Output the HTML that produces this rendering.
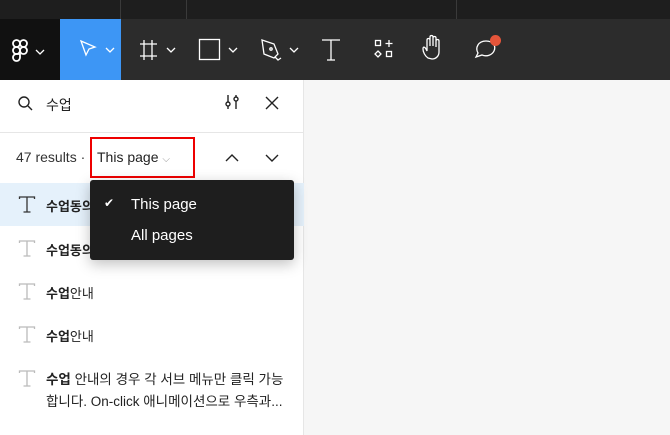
<!DOCTYPE html>
<html><head><meta charset="utf-8"><style>
*{margin:0;padding:0;box-sizing:border-box}
body{width:670px;height:435px;overflow:hidden;background:#f6f6f6;font-family:"Liberation Sans","Noto Sans CJK KR",sans-serif;position:relative}
.a{position:absolute}
.top{left:0;top:0;width:670px;height:19px;background:#1e1e1e}
.sep{top:0;width:1px;height:19px;background:#3a3a3a}
.tb{left:0;top:19px;width:670px;height:61px;background:#2c2c2c}
.panel{left:0;top:80px;width:304px;height:355px;background:#fff;border-right:1px solid #e6e6e6}
.t{font-size:14px;color:#222}
svg{position:absolute;overflow:visible}
</style></head><body>
<div class="a top"></div>
<div class="a sep" style="left:120px"></div><div class="a sep" style="left:186px"></div><div class="a sep" style="left:456px"></div>
<div class="a tb"></div>
<div class="a" style="left:0;top:19px;width:60px;height:61px;background:#111"></div>
<div class="a" style="left:60px;top:19px;width:61px;height:61px;background:#3d96f5"></div>
<svg width="670" height="80" style="left:0;top:0" fill="none" stroke="#fff" stroke-width="1.3">
<g transform="translate(13,40) scale(1.4)"><rect x="0" y="0" width="5" height="5" rx="2.5"/><rect x="5" y="0" width="5" height="5" rx="2.5"/><rect x="0" y="5" width="5" height="5" rx="2.5"/><circle cx="7.5" cy="7.5" r="2.5"/><path d="M2.5 10a2.5 2.5 0 1 0 2.5 2.5V10z"/></g>
<path d="M36 50l4 4 4-4"/>
<path d="M81 41l14 6-6 2-3 6z"/><path d="M106 48l4 4 4-4"/>
<path d="M144 40v20M152 40v20M140 44h17M140 56h17"/><path d="M167 48l4 4 4-4"/>
<rect x="199.5" y="39.5" width="20" height="20"/><path d="M229 48l4 4 4-4"/>
<path d="M262 40l12 4 4 10-4 4-10-4z"/><circle cx="271" cy="49" r="1.2"/><path d="M275 57l3 3 3-2"/><path d="M290 48l4 4 4-4"/>
<path d="M322 40h18M331 40v20M327 60h8"/>
<rect x="375.5" y="40.5" width="5" height="5"/><path d="M389 40v7M385.5 43.5h7"/><path d="M378 51l3 3-3 3-3-3z"/><rect x="386.5" y="51.5" width="5" height="5"/>
<path d="M428 58c-3-2-5-6-5-9s2-2 3 0l1 2V40c0-2 3-2 3 0v6-9c0-2 3-2 3 0v9-8c0-2 3-2 3 0v9-6c0-2 3-2 3 0v11c0 4-3 7-7 7z"/>
<path d="M476 57l2-4c-3-5 0-12 8-12s10 6 8 10c-2 4-7 6-12 4z"/>
</svg>
<div class="a" style="left:490px;top:35px;width:11px;height:11px;border-radius:50%;background:#e5553a"></div>
<div class="a panel"></div>
<div class="a" style="left:0;top:183px;width:304px;height:43px;background:#e5f1fb"></div>
<svg width="304" height="355" style="left:0;top:80px" fill="none" stroke="#222" stroke-width="1.4">
<circle cx="24" cy="22" r="5"/><path d="M28 26l4 4"/>
<path d="M228 15v14M236 15v14"/><circle cx="228" cy="24" r="2" fill="#fff"/><circle cx="236" cy="19" r="2" fill="#fff"/>
<path d="M266 17l12 12M278 17l-12 12"/>
<path d="M226 81l6-6 6 6M266 75l6 6 6-6"/>
<g stroke-width="1.3">
<path d="M19.5 119v-2h15v2M27 117v15M23.5 132h7" stroke="#333"/>
<path d="M19.5 163v-2h15v2M27 161v15M23.5 176h7" stroke="#bbb"/>
<path d="M19.5 206v-2h15v2M27 204v15M23.5 219h7" stroke="#bbb"/>
<path d="M19.5 249v-2h15v2M27 247v15M23.5 262h7" stroke="#bbb"/>
<path d="M19.5 293v-2h15v2M27 291v15M23.5 306h7" stroke="#bbb"/>
</g>
</svg>
<div class="a t" style="left:46px;top:95px">수업</div>
<div class="a" style="left:0;top:132px;width:304px;height:1px;background:#e6e6e6"></div>
<div class="a t" style="left:16px;top:149px;color:#333">47 results ·</div>
<div class="a t" style="left:97px;top:149px">This page <span style="color:#999;font-size:10px">⌵</span></div>
<div class="a" style="left:90px;top:137px;width:105px;height:41px;border:2px solid #e00"></div>
<div class="a t" style="left:46px;top:196px;font-weight:bold;font-size:13px">수업동의</div>
<div class="a t" style="left:46px;top:240px;font-weight:bold;font-size:13px">수업동의</div>
<div class="a t" style="left:46px;top:283px;font-size:13px"><b>수업</b>안내</div>
<div class="a t" style="left:46px;top:326px;font-size:13px"><b>수업</b>안내</div>
<div class="a t" style="left:46px;top:369px;line-height:22px;width:255px;font-size:13.5px"><b>수업</b> 안내의 경우 각 서브 메뉴만 클릭 가능<br>합니다. On-click 애니메이션으로 우측과...</div>
<div class="a" style="left:90px;top:180px;width:204px;height:80px;background:#1e1e1e;border-radius:3px;box-shadow:0 4px 14px rgba(0,0,0,.25)"></div>
<div class="a" style="left:104px;top:196px;color:#fff;font-size:12px">✔</div>
<div class="a" style="left:131px;top:196px;color:#fff;font-size:15px">This page</div>
<div class="a" style="left:131px;top:227px;color:#fff;font-size:15px">All pages</div>
</body></html>
